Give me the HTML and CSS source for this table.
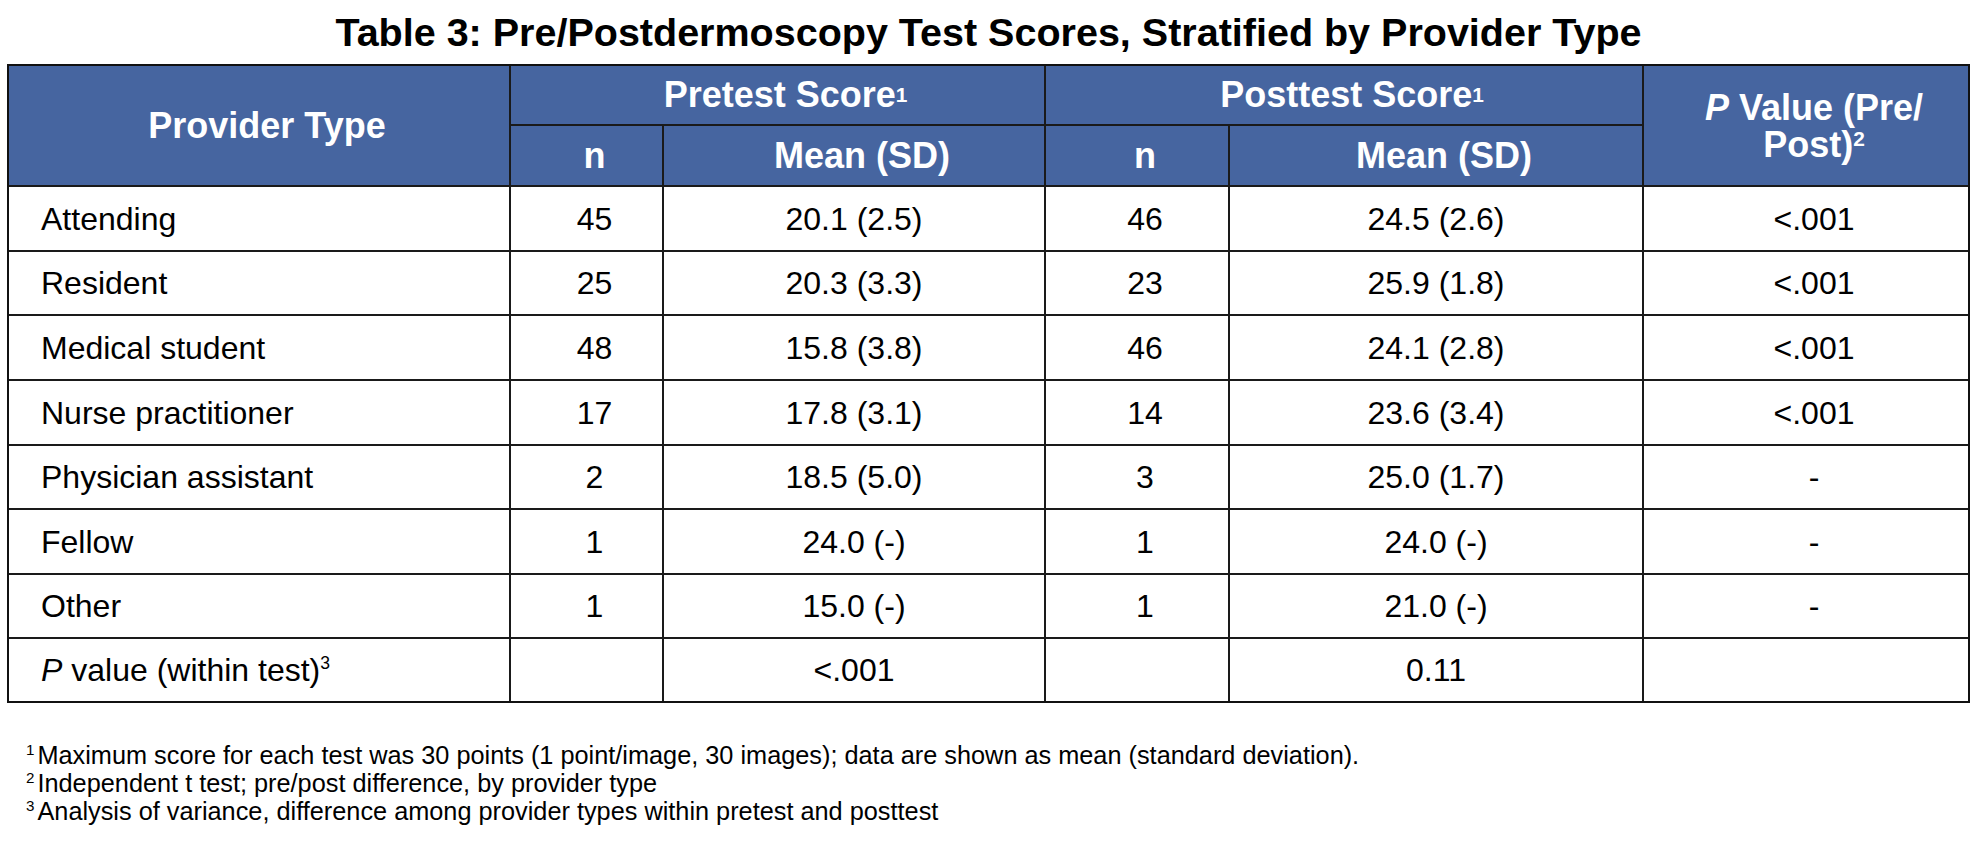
FILE: index.html
```html
<!DOCTYPE html>
<html lang="en">
<head>
<meta charset="utf-8">
<title>Table 3</title>
<link rel="stylesheet" href="styles.css">
</head>
<body>
<div class="page">
  <h1 class="title">Table 3: Pre/Postdermoscopy Test Scores, Stratified by Provider Type</h1>
  <div class="table" role="table">
    <div class="cell head provider" role="columnheader">Provider Type</div>
    <div class="cell head pre" role="columnheader">Pretest Score<sup class="hsup">1</sup></div>
    <div class="cell head post" role="columnheader">Posttest Score<sup class="hsup">1</sup></div>
    <div class="cell head pval last" role="columnheader"><span><i>P</i> Value (Pre/<br>Post)<sup class="hsup">2</sup></span></div>
    <div class="cell head sub" role="columnheader">n</div>
    <div class="cell head sub" role="columnheader">Mean (SD)</div>
    <div class="cell head sub" role="columnheader">n</div>
    <div class="cell head sub" role="columnheader">Mean (SD)</div>

    <div class="cell name">Attending</div>
    <div class="cell num">45</div>
    <div class="cell">20.1 (2.5)</div>
    <div class="cell num">46</div>
    <div class="cell">24.5 (2.6)</div>
    <div class="cell num last">&lt;.001</div>

    <div class="cell name">Resident</div>
    <div class="cell num">25</div>
    <div class="cell">20.3 (3.3)</div>
    <div class="cell num">23</div>
    <div class="cell">25.9 (1.8)</div>
    <div class="cell num last">&lt;.001</div>

    <div class="cell name">Medical student</div>
    <div class="cell num">48</div>
    <div class="cell">15.8 (3.8)</div>
    <div class="cell num">46</div>
    <div class="cell">24.1 (2.8)</div>
    <div class="cell num last">&lt;.001</div>

    <div class="cell name">Nurse practitioner</div>
    <div class="cell num">17</div>
    <div class="cell">17.8 (3.1)</div>
    <div class="cell num">14</div>
    <div class="cell">23.6 (3.4)</div>
    <div class="cell num last">&lt;.001</div>

    <div class="cell name">Physician assistant</div>
    <div class="cell num">2</div>
    <div class="cell">18.5 (5.0)</div>
    <div class="cell num">3</div>
    <div class="cell">25.0 (1.7)</div>
    <div class="cell num last">-</div>

    <div class="cell name">Fellow</div>
    <div class="cell num">1</div>
    <div class="cell">24.0 (-)</div>
    <div class="cell num">1</div>
    <div class="cell">24.0 (-)</div>
    <div class="cell num last">-</div>

    <div class="cell name">Other</div>
    <div class="cell num">1</div>
    <div class="cell">15.0 (-)</div>
    <div class="cell num">1</div>
    <div class="cell">21.0 (-)</div>
    <div class="cell num last">-</div>

    <div class="cell name bottom"><span><i>P</i> value (within test)<sup class="bsup">3</sup></span></div>
    <div class="cell bottom"></div>
    <div class="cell bottom">&lt;.001</div>
    <div class="cell bottom"></div>
    <div class="cell bottom">0.11</div>
    <div class="cell bottom last"></div>
  </div>
  <div class="notes">
    <p><sup class="fsup">1</sup>Maximum score for each test was 30 points (1 point/image, 30 images); data are shown as mean (standard deviation).</p>
    <p><sup class="fsup">2</sup>Independent t test; pre/post difference, by provider type</p>
    <p><sup class="fsup">3</sup>Analysis of variance, difference among provider types within pretest and posttest</p>
  </div>
</div>
</body>
</html>
```

FILE: styles.css
```css
* { box-sizing: border-box; }
html, body { margin: 0; padding: 0; background: #ffffff; }
body { font-family: "Liberation Sans", Arial, sans-serif; color: #000; }

.page {
  width: 1971px;
  padding: 10px 0 0 7px;
}

.title {
  margin: 0 0 9px 0;
  width: 1963px;
  text-align: center;
  font-size: 39.5px;
  line-height: 45px;
  font-weight: bold;
}

.table {
  display: grid;
  width: 1963px;
  grid-template-columns: 502px 153px 382px 184px 414px 324px;
  grid-template-rows: 60px 61px 65px 64px 65px 65px 64px 65px 64px 62px;
  border: 2px solid #111;
}

.cell {
  display: flex;
  align-items: center;
  justify-content: center;
  border-right: 2px solid #1a1a1a;
  border-bottom: 2px solid #1a1a1a;
  font-size: 32px;
  line-height: 1;
  white-space: nowrap;
}
.cell.last { border-right: none; }
.cell.bottom { border-bottom: none; }
.cell.num { padding-left: 16px; }

.cell.name {
  justify-content: flex-start;
  padding-left: 32px;
}

.head {
  background: #4665a0;
  color: #ffffff;
  font-weight: bold;
  font-size: 36px;
  padding-left: 16px;
}
.provider { grid-row: 1 / span 2; }
.pre { grid-column: 2 / span 2; }
.post { grid-column: 4 / span 2; }
.pval { grid-column: 6; grid-row: 1 / span 2; text-align: center; line-height: 37px; }

.hsup {
  font-size: 0.58em;
  vertical-align: 0.55em;
  line-height: 0;
}
.bsup {
  font-size: 0.55em;
  vertical-align: 0.7em;
  line-height: 0;
}

.notes {
  margin-top: 38px;
  padding-left: 19px;
}
.notes p {
  margin: 0;
  font-size: 25.3px;
  line-height: 28px;
}
.fsup {
  font-size: 0.6em;
  vertical-align: 0.6em;
  line-height: 0;
  margin-right: 3px;
}
```
